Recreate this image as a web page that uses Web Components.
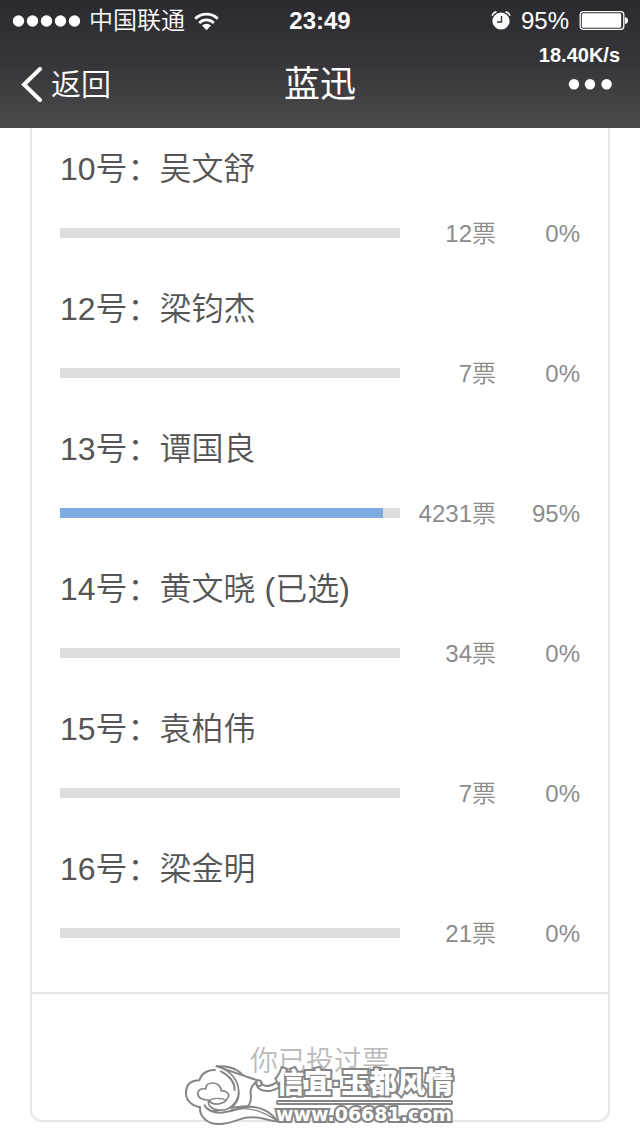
<!DOCTYPE html>
<html lang="zh-CN">
<head>
<meta charset="utf-8">
<meta name="viewport" content="width=device-width">
<title>蓝迅</title>
<style>
  body {
    margin: 0;
    background: #fff;
    color: #555;
    font-family: 'Liberation Sans', 'Noto Sans CJK SC', sans-serif;
    font-weight: 350;
  }
  .page {
    position: relative;
    padding-bottom: 14px;
  }
</style>
</head>
<body>
<div class="page">
  <app-header>
    <status-bar slot="status" carrier="中国联通" time="23:49" battery="95"></status-bar>
    <nav-bar slot="nav" back="返回">蓝迅</nav-bar>
    <span slot="speed">18.40K/s</span>
  </app-header>
  <vote-card>
    <vote-item votes="12" percent="0">10号：吴文舒</vote-item>
    <vote-item votes="7" percent="0">12号：梁钧杰</vote-item>
    <vote-item votes="4231" percent="95">13号：谭国良</vote-item>
    <vote-item votes="34" percent="0">14号：黄文晓 (已选)</vote-item>
    <vote-item votes="7" percent="0">15号：袁柏伟</vote-item>
    <vote-item votes="21" percent="0">16号：梁金明</vote-item>
    <span slot="footer">你已投过票</span>
  </vote-card>
  <site-mark>
    <span slot="name">信宜·玉都风情</span>
    <span slot="url">www.06681.com</span>
  </site-mark>
</div>

<script>
//attach an open shadow root and fill it
function render(el, html) {
  const template = document.createElement('template');
  template.innerHTML = html;
  el.attachShadow({ mode: 'open' });
  el.shadowRoot.appendChild(template.content.cloneNode(true));
}

//dark gradient header, holds the status bar and the nav bar
class AppHeader extends HTMLElement {
  constructor() {
    super();
    render(this, `
<style>
  :host {
    display: block;
    position: relative;
    color: #fff;
    background: linear-gradient(#2b2a2f, #363539 50%, #4b4b4c);
  }
  .speed {
    position: absolute;
    top: 43px;
    right: 20px;
    font-size: 20px;
    font-weight: bold;
    line-height: 24px;
  }
</style>
<slot name="status"></slot>
<slot name="nav"></slot>
<div class="speed"><slot name="speed"></slot></div>`);
  }
}

class StatusBar extends HTMLElement {
  constructor() {
    super();
    render(this, `
<style>
  :host {
    display: grid;
    grid-template-columns: 1fr auto 1fr;
    align-items: center;
    padding: 0 12px;
    font-size: 24px;
    line-height: 42px;
  }
  .side {
    display: flex;
    align-items: center;
    gap: 9px;
  }
  .right {
    justify-content: flex-end;
    gap: 10px;
  }
  .time {
    font-weight: bold;
  }
  svg {
    display: block;
    fill: #fff;
  }
</style>
<div class="side">
  <svg width="68" height="12" viewBox="0 0 68 12">
    <circle cx="6.5" cy="6" r="5.7"/><circle cx="20.5" cy="6" r="5.7"/><circle cx="34.5" cy="6" r="5.7"/><circle cx="48.5" cy="6" r="5.7"/><circle cx="62.5" cy="6" r="5.7"/>
  </svg>
  <span class="carrier"></span>
  <svg width="25" height="19" viewBox="0 0 25 19">
    <g fill="none" stroke="#fff" stroke-width="2.7">
      <path d="M1.2 6.8a16 16 0 0 1 22.6 0"/>
      <path d="M5.2 11a10.3 10.3 0 0 1 14.6 0"/>
    </g>
    <path d="M8 13.6a6.4 6.4 0 0 1 9 0L12.5 18.3z"/>
  </svg>
</div>
<span class="time"></span>
<div class="side right">
  <svg width="20" height="20" viewBox="0 0 20 20">
    <circle cx="10" cy="10" r="8.6"/>
    <path d="M1 4.8Q2 1.500 5.5 .7M14.5 .7Q18 1.500 19 4.8" fill="none" stroke="#fff" stroke-width="1.4"/>
    <path d="M10.5 5v6H6" fill="none" stroke="#343338" stroke-width="1.4"/>
  </svg>
  <span class="level"></span>
  <svg width="49" height="20" viewBox="0 0 49 20">
    <rect x="1.2" y=".7" width="43.6" height="17.6" rx="3" fill="none" stroke="#fff" stroke-width="1.3"/>
    <rect x="2.8" y="2.3" width="39.4" height="14.4" rx="1.5"/>
    <path d="M46 6q3 .5 3 3.5t-3 3.5z"/>
  </svg>
</div>`);
    this.shadowRoot.querySelector('.carrier').textContent = this.getAttribute('carrier');
    this.shadowRoot.querySelector('.time').textContent = this.getAttribute('time');
    this.shadowRoot.querySelector('.level').textContent = `${this.getAttribute('battery')}%`;
  }
}

class NavBar extends HTMLElement {
  constructor() {
    super();
    render(this, `
<style>
  :host {
    display: grid;
    grid-template-columns: 1fr auto 1fr;
    align-items: center;
    height: 86px;
    padding: 0 28px 0 20px;
  }
  button {
    display: flex;
    align-items: center;
    gap: 8px;
    padding: 0;
    border: 0;
    background: none;
    color: inherit;
    font: inherit;
    font-size: 30px;
    line-height: 44px;
    cursor: pointer;
  }
  .more {
    justify-self: end;
  }
  h1 {
    margin: 0;
    padding-left: 8px;
    font-size: 36px;
    font-weight: 400;
    line-height: 44px;
  }
</style>
<button class="back">
  <svg width="23" height="36" viewBox="0 0 23 36"><path d="M20 2L4 17.5l16 15.5" fill="none" stroke="#fff" stroke-width="4" stroke-linecap="round"/></svg>
  <span></span>
</button>
<h1><slot></slot></h1>
<button class="more" aria-label="更多">
  <svg width="44" height="12" viewBox="0 0 44 12" fill="#fff"><circle cx="6" cy="5.2" r="5.2"/><circle cx="22" cy="5.2" r="5.2"/><circle cx="38.6" cy="5.2" r="5.2"/></svg>
</button>`);
    this.shadowRoot.querySelector('.back span').textContent = this.getAttribute('back');
  }
}

//bordered card, its top edge is scrolled under the header
class VoteCard extends HTMLElement {
  constructor() {
    super();
    render(this, `
<style>
  :host {
    display: block;
    margin: 0 30px;
    border: 2px solid #e7e7e7;
    border-top: 0;
    border-radius: 0 0 12px 12px;
  }
  .list {
    padding: 0 28px 24px;
  }
  .footer {
    padding: 46px 0 36px;
    border-top: 2px solid #e7e7e7;
    color: #bbb;
    font-size: 28px;
    line-height: 44px;
    text-align: center;
  }
</style>
<div class="list"><slot></slot></div>
<div class="footer"><slot name="footer"></slot></div>`);
  }
}

class VoteItem extends HTMLElement {
  constructor() {
    super();
    render(this, `
<style>
  :host {
    display: block;
    padding: 19px 0 18px;
  }
  .name {
    font-size: 32px;
    line-height: 44px;
  }
  .result {
    display: grid;
    grid-template-columns: 1fr 96px 84px;
    align-items: center;
    margin-top: 27px;
    color: #8c8c8c;
    font-size: 24px;
    line-height: 32px;
    text-align: right;
  }
  .bar {
    height: 10px;
    margin-bottom: 2px;
    background: #ddd;
  }
  .fill {
    height: 10px;
    background: #7eace0;
  }
</style>
<div class="name"><slot></slot></div>
<div class="result">
  <div class="bar"><div class="fill"></div></div>
  <span class="votes"></span>
  <span class="percent"></span>
</div>`);
    const percent = this.getAttribute('percent');
    this.shadowRoot.querySelector('.fill').style.width = `${percent}%`;
    this.shadowRoot.querySelector('.votes').textContent = `${this.getAttribute('votes')}票`;
    this.shadowRoot.querySelector('.percent').textContent = `${percent}%`;
  }
}

//site logo that floats over the bottom of the page
class SiteMark extends HTMLElement {
  constructor() {
    super();
    render(this, `
<style>
  :host {
    position: absolute;
    bottom: 10px;
    left: 50%;
    margin-left: -136px;
    display: flex;
    color: #fff;
    white-space: nowrap;
  }
  svg {
    display: block;
    margin-right: -4px;
  }
  .text {
    position: relative;
    padding-top: 4px;
    font-weight: 900;
    -webkit-text-stroke: 4px #858585;
    paint-order: stroke fill;
  }
  .name {
    font-family: 'Liberation Sans', 'Noto Sans CJK SC', sans-serif;
    font-size: 28px;
    line-height: 32px;
  }
  .line {
    height: 1px;
    border: 2px solid #858585;
    border-radius: 2px;
    background: #fff;
  }
  .url {
    font-family: 'DejaVu Sans', sans-serif;
    font-size: 19px;
    line-height: 18px;
  }
</style>
<svg width="96" height="62" viewBox="42 102 288 186" fill="#fff" stroke="#858585" stroke-width="6" stroke-linejoin="round" stroke-linecap="round">
  <path d="M90 232C60 226 46 207 48 184C50 162 65 151 88 151C96 124 125 114 153 124L205 180L185 232L120 245Z"/>
  <path d="M140 109C182 107 216 119 230 157C238 148 248 146 262 151C276 150 280 163 270 168C260 169 256 161 259 155C258 177 276 186 303 182C317 179 325 174 330 169L330 151C315 158 306 170 288 168C279 166 275 162 273 158"/>
  <path d="M262 151C247 166 238 176 243 198C243 213 240 222 234 228L183 233C208 214 212 190 199 160C189 134 170 118 140 109Z"/>
  <path d="M140 109C183 119 207 154 206 188C203 222 174 244 145 240C123 237 112 226 116 210C124 225 151 226 169 211C173 205 176 201 176 195C175 187 165 182 154 183C153 170 144 159 129 159C115 159 107 166 107 177C93 174 83 181 83 191C84 204 99 211 116 210" stroke-width="5"/>
  <path d="M153 124C178 137 194 158 194 180" fill="none"/>
  <path d="M119 211C128 203 154 203 169 211C151 226 126 225 119 211Z" stroke-width="4"/>
  <path d="M90 232C88 260 112 282 145 282C187 284 205 262 244 262C277 261 302 274 322 274C305 247 267 226 229 231C193 239 176 247 150 248C125 248 107 236 104 226" />
  <path d="M185 239C220 233 258 238 283 251C299 258 313 266 322 274" fill="none" stroke-width="4"/>
</svg>
<div class="text">
  <div class="name"><slot name="name"></slot></div>
  <div class="line"></div>
  <div class="url"><slot name="url"></slot></div>
</div>`);
  }
}

//define custom elements
window.customElements.define('app-header', AppHeader);
window.customElements.define('status-bar', StatusBar);
window.customElements.define('nav-bar', NavBar);
window.customElements.define('vote-card', VoteCard);
window.customElements.define('vote-item', VoteItem);
window.customElements.define('site-mark', SiteMark);
</script>
</body>
</html>
